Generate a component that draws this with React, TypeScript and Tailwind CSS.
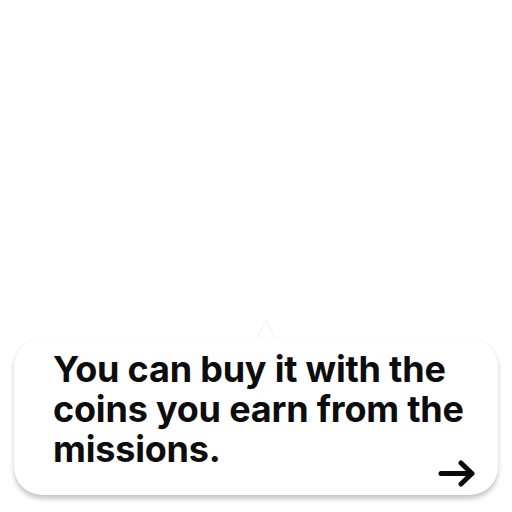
import React from 'react';

// Tooltip card shown near the bottom of the screen
function TipCard() {
  return (
    <div className="relative">
      {/* little pointer on top */}
      <svg
        className="absolute left-[240px] top-[-20px]"
        width="24"
        height="22"
        viewBox="0 0 24 22"
      >
        <path d="M2 21 L12 2 L22 21" fill="#ffffff" stroke="#e5e5e5" strokeWidth="1" strokeDasharray="1.5 1.5" />
      </svg>
      <div className="relative h-[157px] rounded-[28px] bg-white pl-[39px] pr-[20px] pt-[11px] shadow-[0_4px_5px_rgba(0,0,0,0.22),0_0_2px_rgba(0,0,0,0.06)]">
        <p
          className="whitespace-nowrap text-[36px] font-bold leading-[40px] tracking-[-0.2px] text-[#0d0d0d]"
          style={{ fontFamily: 'Inter, "Noto Sans", sans-serif' }}
        >
          You can buy it with the
          <br />
          coins you earn from the
          <br />
          missions.
        </p>
        <div className="-mt-[9px] flex justify-end pr-[2px]">
          <svg width="40" height="30" viewBox="0 0 40 30" fill="none">
            <path
              d="M5 13.5 H36 M25 3 L36 13.5 L25 24"
              stroke="#0a0a0a"
              strokeWidth="5"
              strokeLinecap="round"
              strokeLinejoin="round"
            />
          </svg>
        </div>
      </div>
    </div>
  );
}

export default function App() {
  return (
    <div className="flex h-[512px] w-[512px] flex-col justify-end bg-white px-[14px] pb-[17px]">
      <TipCard />
    </div>
  );
}
